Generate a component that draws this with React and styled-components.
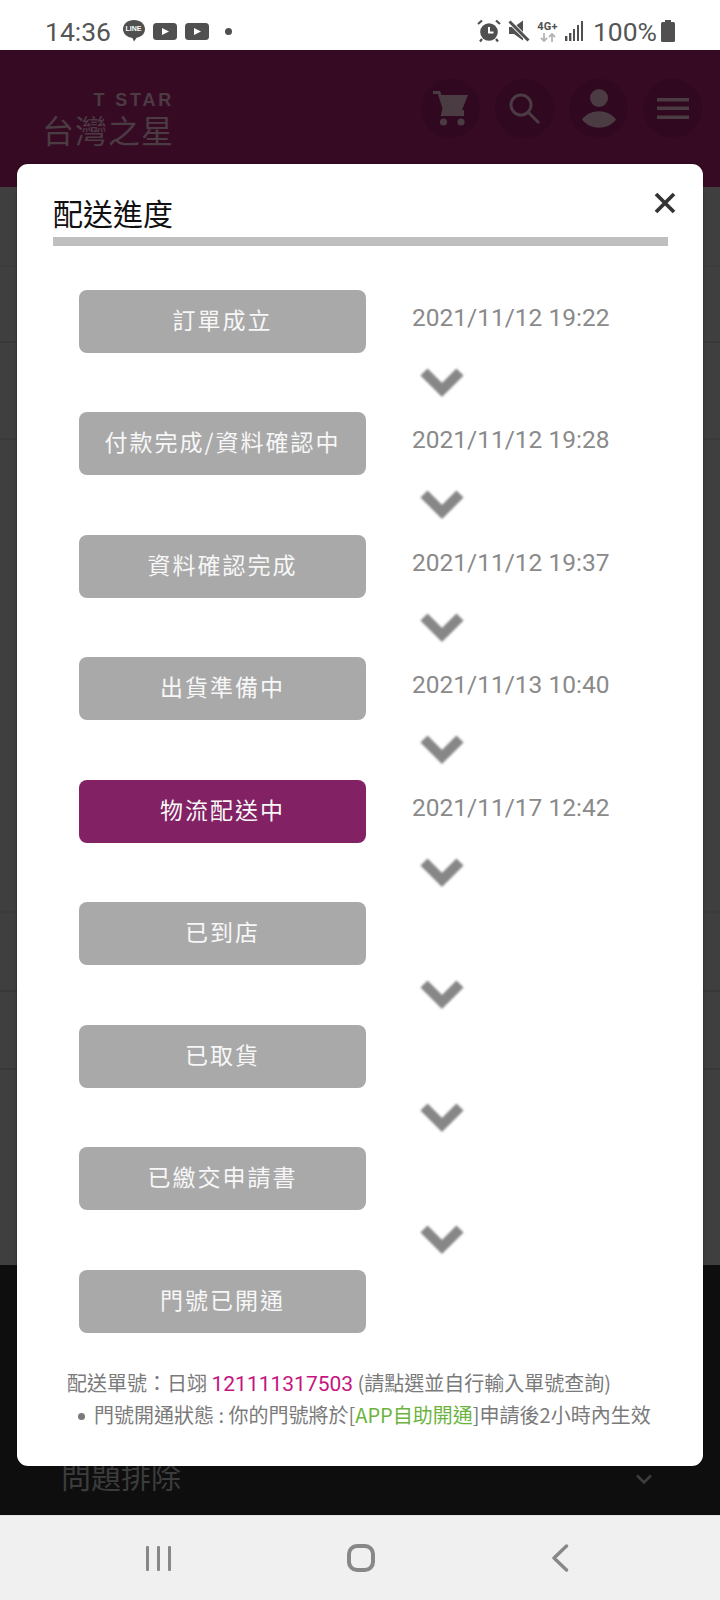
import styled, { createGlobalStyle } from 'styled-components';

const steps = [
  { label: '訂單成立', date: '2021/11/12 19:22' },
  { label: '付款完成/資料確認中', date: '2021/11/12 19:28' },
  { label: '資料確認完成', date: '2021/11/12 19:37' },
  { label: '出貨準備中', date: '2021/11/13 10:40' },
  { label: '物流配送中', date: '2021/11/17 12:42', active: true },
  { label: '已到店' },
  { label: '已取貨' },
  { label: '已繳交申請書' },
  { label: '門號已開通' },
];

const backgroundRows = [
  { height: 80, line: '#3c3c3c' },
  { height: 76, line: '#393939' },
  { height: 97, line: '#3a3a3a' },
  { height: 473, line: '#3c3c3c' },
  { height: 79, line: '#373737' },
  { height: 78, line: '#383838' },
  { height: 195, line: 'transparent' },
];

const CartIcon = () => (
  <svg width="36" height="36" viewBox="0 0 36 36">
    <path d="M0 1.5h6l6 19h19" fill="none" stroke="#4b3b43" strokeWidth="3" />
    <path d="M7 4h28l-6 15H11z" fill="#4b3b43" />
    <path d="M11 18l-1.5 5.5H31" fill="none" stroke="#4b3b43" strokeWidth="3" />
    <circle cx="10.5" cy="31" r="3.6" fill="#4b3b43" />
    <circle cx="28" cy="31" r="3.6" fill="#4b3b43" />
  </svg>
);

const SearchIcon = () => (
  <svg width="32" height="32" viewBox="0 0 32 32" fill="none" stroke="#4b3b43" strokeWidth="3">
    <circle cx="12" cy="12" r="10" />
    <path d="M19 19l11 11" />
  </svg>
);

const UserIcon = () => (
  <svg width="36" height="40" viewBox="0 0 36 40" fill="#4b3b43">
    <circle cx="18" cy="9" r="9" />
    <path d="M1 30.5C9 19.5 27 19.5 35 30.5C27 41.5 9 41.5 1 30.5Z" />
  </svg>
);

const MenuIcon = () => (
  <svg width="32" height="22" viewBox="0 0 32 22" fill="#4b3b43">
    <rect y="0" width="32" height="3.5" />
    <rect y="8.5" width="32" height="3.5" />
    <rect y="17.5" width="32" height="3.5" />
  </svg>
);

const LineIcon = () => (
  <LineBubble>
    <svg width="24" height="24" viewBox="0 0 24 24">
      <path d="M12 1C5.6 1 1 4.9 1 10c0 4.7 4 8.3 9.4 8.9L12 22.5l2.6-3.8C19.9 17.9 23 14.4 23 10 23 4.9 18.4 1 12 1z" fill="#505050" />
    </svg>
    <LineText>LINE</LineText>
  </LineBubble>
);

const PlayIcon = () => (
  <svg width="24" height="17" viewBox="0 0 24 17">
    <rect width="24" height="17" rx="3.5" fill="#505050" />
    <path d="M9 5l7 3.5-7 3.5z" fill="#fff" />
  </svg>
);

const AlarmIcon = () => (
  <svg width="24" height="24" viewBox="0 0 24 24">
    <circle cx="12" cy="13" r="8.8" fill="#505050" />
    <path d="M12 8v5.5h4.5" fill="none" stroke="#fff" strokeWidth="2" />
    <path d="M1 5l4-3.5M23 5l-4-3.5M5 20l-2 2.5M19 20l2 2.5" stroke="#505050" strokeWidth="2.2" />
  </svg>
);

const MuteIcon = () => (
  <svg width="22" height="22" viewBox="0 0 22 22">
    <path d="M1 7h5l9-6.5v20L6 14H1z" fill="#505050" />
    <path d="M1.5 1.5l19 19" stroke="#fff" strokeWidth="4.5" />
    <path d="M1.5 1.5l19 19" stroke="#505050" strokeWidth="3" />
  </svg>
);

const DataArrows = () => (
  <svg width="16" height="9" viewBox="0 0 16 9" fill="none" stroke="#b5b5b5" strokeWidth="1.8">
    <path d="M4 0v8M1 5l3 3 3-3M12 9V1M9 4l3-3 3 3" />
  </svg>
);

const SignalIcon = () => (
  <svg width="19" height="20" viewBox="0 0 19 20" fill="#505050">
    <rect x="0" y="15" width="2.4" height="5" />
    <rect x="4" y="12" width="2.4" height="8" />
    <rect x="8" y="8" width="2" height="12" />
    <rect x="12" y="4" width="2" height="16" />
    <rect x="16" y="0" width="2" height="20" />
  </svg>
);

const BatteryIcon = () => (
  <svg width="14" height="22" viewBox="0 0 14 22" fill="#505050">
    <rect x="4" y="0" width="6" height="3" />
    <rect x="0" y="2" width="14" height="20" rx="1.5" />
  </svg>
);

const StepChevron = () => (
  <svg width="46" height="31" viewBox="0 0 46 31" fill="none">
    <path d="M5 5l18 18L41 5" stroke="#878787" strokeWidth="10" />
  </svg>
);

const App = () => {
  return (
    <>
      <GlobalStyle />
      <Screen>
        <StatusBar>
          <LeftStatus>
            <Clock>14:36</Clock>
            <LineIcon />
            <PlayIcon />
            <PlayIcon />
            <NotifyDot />
          </LeftStatus>
          <RightStatus>
            <AlarmIcon />
            <MuteIcon />
            <NetworkBlock>
              <NetworkLabel>4G+</NetworkLabel>
              <DataArrows />
            </NetworkBlock>
            <SignalIcon />
            <BatteryText>100%</BatteryText>
            <BatteryIcon />
          </RightStatus>
        </StatusBar>

        <Header>
          <Logo>
            <LogoLatin>T STAR</LogoLatin>
            <LogoName>台灣之星</LogoName>
          </Logo>
          <HeaderActions>
            <RoundAction><CartIcon /></RoundAction>
            <RoundAction><SearchIcon /></RoundAction>
            <RoundAction><UserIcon /></RoundAction>
            <RoundAction><MenuIcon /></RoundAction>
          </HeaderActions>
        </Header>

        <PageBody>
          {backgroundRows.map((row, i) => (
            <BackRow key={i} $height={row.height} $line={row.line} />
          ))}
        </PageBody>

        <PageFooter>
          <FooterTitle>問題排除</FooterTitle>
          <svg width="18" height="11" viewBox="0 0 18 11" fill="none">
            <path d="M2 1.5l7 7 7-7" stroke="#3d3d3d" strokeWidth="2.6" />
          </svg>
        </PageFooter>

        <NavBar>
          <RecentButton>
            <i />
            <i />
            <i />
          </RecentButton>
          <HomeButton />
          <svg width="18" height="28" viewBox="0 0 18 28" fill="none">
            <path d="M15.5 2L3 14l12.5 12" stroke="#888" strokeWidth="3.4" strokeLinecap="round" strokeLinejoin="round" />
          </svg>
        </NavBar>

        <Modal>
          <CloseButton>
            <svg width="22" height="22" viewBox="0 0 22 22">
              <path d="M2 2l18 18M20 2L2 20" stroke="#333" strokeWidth="3.8" />
            </svg>
          </CloseButton>
          <ModalTitle>配送進度</ModalTitle>
          <StepList>
            {steps.map((step, i) => (
              <StepGroup key={step.label}>
                <StepRow>
                  <StepButton $active={step.active}>{step.label}</StepButton>
                  {step.date && <StepDate>{step.date}</StepDate>}
                </StepRow>
                {i < steps.length - 1 && (
                  <ChevronRow>
                    <StepChevron />
                  </ChevronRow>
                )}
              </StepGroup>
            ))}
          </StepList>
          <Notes>
            <NoteLine>
              配送單號：日翊 <TrackingNo>121111317503</TrackingNo> (請點選並自行輸入單號查詢)
            </NoteLine>
            <NoteBullet>
              門號開通狀態 : 你的門號將於[<GreenText>APP自助開通</GreenText>]申請後2小時內生效
            </NoteBullet>
          </Notes>
        </Modal>
      </Screen>
    </>
  );
};

export default App;

const cjk = `'Noto Sans CJK TC', 'Noto Sans', sans-serif`;

const GlobalStyle = createGlobalStyle`
  html, body {
    margin: 0;
    padding: 0;
    background: #fff;
  }
  * {
    box-sizing: border-box;
  }
`;

const Screen = styled.div`
  position: relative;
  width: 720px;
  height: 1600px;
  overflow: hidden;
  display: flex;
  flex-direction: column;
  font-family: ${cjk};
`;

const StatusBar = styled.div`
  height: 50px;
  flex: none;
  background: #fff;
  display: flex;
  align-items: center;
  justify-content: space-between;
  padding: 12px 45px 0 45px;
`;

const LeftStatus = styled.div`
  display: flex;
  align-items: center;
  gap: 7.5px;
`;

const RightStatus = styled.div`
  display: flex;
  align-items: center;
  gap: 7px;
  & > svg:last-child {
    margin-left: -3px;
  }
`;

const Clock = styled.span`
  font-family: Roboto, sans-serif;
  font-size: 26.5px;
  color: #555;
  margin-right: 3px;
`;

const LineBubble = styled.span`
  position: relative;
  display: flex;
  width: 24px;
  height: 24px;
`;

const LineText = styled.span`
  position: absolute;
  top: 6px;
  left: 0;
  width: 24px;
  text-align: center;
  font-family: 'Liberation Sans', sans-serif;
  font-size: 7px;
  line-height: 8px;
  font-weight: 700;
  color: #fff;
`;

const NotifyDot = styled.span`
  width: 7px;
  height: 7px;
  margin-left: 9px;
  border-radius: 50%;
  background: #505050;
`;

const NetworkBlock = styled.div`
  display: flex;
  flex-direction: column;
  align-items: center;
  gap: 1px;
`;

const NetworkLabel = styled.span`
  font-family: Roboto, sans-serif;
  font-size: 11px;
  line-height: 11px;
  font-weight: 700;
  letter-spacing: 0.3px;
  color: #505050;
`;

const BatteryText = styled.span`
  margin-left: 2px;
  font-family: Roboto, sans-serif;
  font-size: 26.5px;
  color: #555;
`;

const Header = styled.header`
  height: 137px;
  flex: none;
  background: #370a24;
  display: flex;
  justify-content: space-between;
  padding: 29px 18px 0 44px;
`;

const Logo = styled.div`
  display: flex;
  flex-direction: column;
  align-items: flex-end;
  width: 130px;
  height: 60px;
  padding-top: 12px;
`;

const LogoLatin = styled.span`
  font-family: 'Liberation Sans', sans-serif;
  font-size: 18px;
  line-height: 18px;
  font-weight: 700;
  letter-spacing: 2.8px;
  color: #4b3b43;
`;

const LogoName = styled.span`
  margin-top: 3px;
  font-size: 32px;
  line-height: 34px;
  letter-spacing: 1px;
  white-space: nowrap;
  color: #4b3b43;
`;

const HeaderActions = styled.div`
  display: flex;
  gap: 15px;
`;

const RoundAction = styled.div`
  width: 59px;
  height: 59px;
  border-radius: 50%;
  background: #300820;
  display: flex;
  align-items: center;
  justify-content: center;
`;

const PageBody = styled.div`
  height: 1078px;
  flex: none;
  background: #3f3f3f;
  display: flex;
  flex-direction: column;
`;

const BackRow = styled.div`
  height: ${({ $height }) => $height}px;
  flex: none;
  border-bottom: 2px solid ${({ $line }) => $line};
`;

const PageFooter = styled.div`
  height: 250px;
  flex: none;
  background: #0e0e0e;
  display: flex;
  align-items: flex-end;
  justify-content: space-between;
  padding: 0 67px 20px 61px;
  & > svg {
    margin-bottom: 10px;
  }
`;

const FooterTitle = styled.span`
  font-size: 30px;
  line-height: 40px;
  color: #3c3c3c;
`;

const NavBar = styled.nav`
  flex: 1;
  background: #f0f0f0;
  border-top: 1px solid #e4e4e4;
  display: flex;
  align-items: center;
  justify-content: space-between;
  padding: 0 151px 0 146px;
`;

const RecentButton = styled.div`
  display: flex;
  gap: 8px;
  & > i {
    display: block;
    width: 3px;
    height: 25px;
    border-radius: 1px;
    background: #888;
  }
`;

const HomeButton = styled.div`
  width: 28px;
  height: 28px;
  border: 4px solid #888;
  border-radius: 10px;
`;

const Modal = styled.section`
  position: absolute;
  top: 164px;
  left: 17px;
  width: 686px;
  height: 1302px;
  background: #fff;
  border-radius: 11px;
  box-shadow: 0 0 2px rgba(0, 0, 0, 0.6);
  padding: 26px 35px 0 36px;
`;

const CloseButton = styled.div`
  position: absolute;
  top: 28px;
  right: 27px;
  display: flex;
`;

const ModalTitle = styled.h2`
  margin: 0;
  height: 56px;
  font-size: 30px;
  line-height: 44px;
  font-weight: 400;
  color: #111;
  border-bottom: 9px solid #bfbfbf;
`;

const StepList = styled.div`
  margin-top: 44px;
  padding-left: 26px;
  display: flex;
  flex-direction: column;
`;

const StepGroup = styled.div`
  display: flex;
  flex-direction: column;
`;

const StepRow = styled.div`
  display: grid;
  grid-template-columns: 287px 1fr;
  column-gap: 46px;
  height: 63px;
`;

const StepButton = styled.div`
  height: 63px;
  padding-bottom: 5px;
  border-radius: 8px;
  background: ${({ $active }) => ($active ? '#822164' : '#a9a9a9')};
  color: #f7f7f7;
  display: flex;
  align-items: center;
  justify-content: center;
  font-size: 23px;
  letter-spacing: 2px;
  white-space: nowrap;
`;

const StepDate = styled.span`
  font-family: Roboto, sans-serif;
  font-size: 24.5px;
  line-height: 56px;
  color: #8a8a8a;
  white-space: nowrap;
`;

const ChevronRow = styled.div`
  height: 59.45px;
  padding: 14px 0 0 340px;
  & > svg {
    display: block;
    filter: blur(1px);
  }
`;

const Notes = styled.div`
  margin-top: 34px;
  margin-left: 14px;
  font-size: 20px;
  line-height: 32px;
  color: #7a7a7a;
  white-space: nowrap;
`;

const NoteLine = styled.div``;

const NoteBullet = styled.div`
  position: relative;
  padding-left: 27px;
  &::before {
    content: '';
    position: absolute;
    left: 11px;
    top: 14px;
    width: 7px;
    height: 7px;
    border-radius: 50%;
    background: #7a7a7a;
  }
`;

const TrackingNo = styled.span`
  font-family: Roboto, sans-serif;
  font-size: 21px;
  line-height: 1;
  color: #c4147f;
`;

const GreenText = styled.span`
  color: #6db33f;
`;
